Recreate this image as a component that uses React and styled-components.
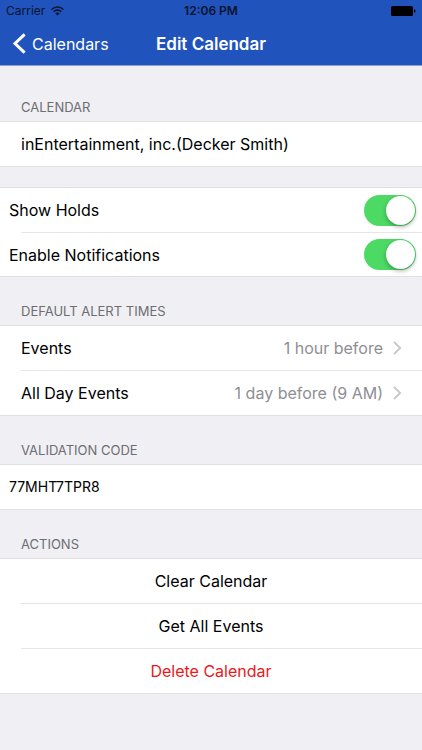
import React, { useState } from "react";
import styled, { createGlobalStyle } from "styled-components";

const GlobalStyle = createGlobalStyle`
  * {
    box-sizing: border-box;
  }
  body {
    margin: 0;
    background: #efeff4;
    color: #000;
    font-family: Inter, "Liberation Sans", sans-serif;
    font-size: 16px;
    line-height: 22px;
  }
`;

const Top = styled.header`
  background: #2053bb;
  border-bottom: 1px solid #8c9fd0;
`;

const StatusBar = styled.div`
  display: grid;
  grid-template-columns: 1fr auto 1fr;
  align-items: center;
  height: 22px;
  padding: 0 6px;
  font-size: 12px;
  line-height: 16px;
  color: #0a1430;
`;

const Carrier = styled.div`
  display: flex;
  align-items: center;
  gap: 6px;
`;

const Clock = styled.div`
  font-weight: 600;
`;

const Battery = styled.svg`
  justify-self: end;
`;

const NavBar = styled.nav`
  display: grid;
  grid-template-columns: 1fr auto 1fr;
  align-items: center;
  height: 43px;
  padding: 0 12px;
  color: #fff;
`;

const BackLink = styled.a`
  display: flex;
  align-items: center;
  gap: 6px;
  color: inherit;
  text-decoration: none;
`;

const Title = styled.h1`
  margin: 0;
  font-size: 17px;
  font-weight: 600;
`;

const SectionTitle = styled.h2`
  display: flex;
  align-items: flex-end;
  height: ${(props) => (props.$first ? "55px" : "48px")};
  margin: 0;
  padding: 0 21px 6px;
  color: #6d6d72;
  font-size: 13px;
  font-weight: 400;
  line-height: 16px;
  text-transform: uppercase;
`;

const Group = styled.div`
  margin-top: ${(props) => (props.$spaced ? "20px" : "0")};
  padding-left: ${(props) => (props.$inset ? "21px" : "0")};
  background: #fff;
  border-top: 1px solid #e0e0e4;
  border-bottom: 1px solid #e0e0e4;
`;

const Row = styled.div`
  display: flex;
  align-items: center;
  justify-content: space-between;
  height: 44px;
  padding: 0 6px 0 0;

  & + & {
    border-top: 1px solid #e6e6e9;
  }
`;

// switch labels start left of the separator
const SwitchLabel = styled.label`
  margin-left: -12px;
`;

const Switch = styled.input`
  appearance: none;
  display: flex;
  width: 52px;
  height: 31px;
  margin: 0;
  padding: 1px;
  border-radius: 16px;
  background: #e5e5ea;
  cursor: pointer;

  &::before {
    content: "";
    width: 29px;
    height: 29px;
    border-radius: 50%;
    background: #fff;
    box-shadow: 0 2px 4px rgba(0, 0, 0, 0.3);
  }

  &:checked {
    justify-content: flex-end;
    background: #4cd964;
  }
`;

const RowButton = styled.button`
  display: flex;
  align-items: center;
  width: 100%;
  height: 44px;
  padding: 0 20px 0 0;
  border: 0;
  background: none;
  color: inherit;
  font: inherit;
  cursor: pointer;

  & + & {
    height: 45px;
    border-top: 1px solid #e6e6e9;
  }
`;

const Value = styled.span`
  margin: 0 10px 0 auto;
  color: #8e8e93;
`;

const Code = styled.div`
  display: flex;
  align-items: center;
  height: 44px;
  padding: 0 9px;
  font-size: 14px;
`;

const Action = styled(RowButton)`
  justify-content: center;
  padding: 0 21px 0 0;
  color: ${(props) => (props.$danger ? "#e8191c" : "#000")};
`;

function WifiIcon() {
  return (
    <svg width="13" height="10" viewBox="0 0 13 10" fill="none" stroke="currentColor" strokeWidth="1.6">
      <path d="M0.6 3.5C3.9 0.2 9.1 0.2 12.4 3.5" />
      <path d="M2.7 5.7C4.8 3.6 8.2 3.6 10.3 5.7" />
      <path d="M6.5 9.6L4.3 7.3C5.5 6.1 7.5 6.1 8.7 7.3Z" fill="currentColor" stroke="none" />
    </svg>
  );
}

function BackIcon() {
  return (
    <svg width="14" height="21" viewBox="0 0 14 21" fill="none" stroke="currentColor" strokeWidth="3">
      <path d="M12.6 1.4L3 10.5L12.6 19.6" />
    </svg>
  );
}

function ChevronIcon() {
  return (
    <svg width="9" height="14" viewBox="0 0 9 14" fill="none" stroke="#c7c7cc" strokeWidth="1.8">
      <path d="M1 1L7.2 7L1 13" />
    </svg>
  );
}

function SwitchRow({ id, label }) {
  const [on, setOn] = useState(true);
  return (
    <Row>
      <SwitchLabel htmlFor={id}>{label}</SwitchLabel>
      <Switch id={id} type="checkbox" role="switch" checked={on} onChange={() => setOn(!on)} />
    </Row>
  );
}

function AlertRow({ label, value }) {
  return (
    <RowButton type="button">
      {label}
      <Value>{value}</Value>
      <ChevronIcon />
    </RowButton>
  );
}

export default function App() {
  return (
    <>
      <GlobalStyle />
      <Top>
        <StatusBar>
          <Carrier>
            Carrier <WifiIcon />
          </Carrier>
          <Clock>12:06 PM</Clock>
          <Battery width="25" height="10" viewBox="0 0 25 10" fill="#000">
            <rect width="22" height="10" rx="1.5" />
            <path d="M23 3.2C25 3.6 25 6.4 23 6.8Z" />
          </Battery>
        </StatusBar>
        <NavBar>
          <BackLink href="#calendars">
            <BackIcon />
            Calendars
          </BackLink>
          <Title>Edit Calendar</Title>
        </NavBar>
      </Top>
      <main>
        <SectionTitle $first>Calendar</SectionTitle>
        <Group $inset>
          <Row>inEntertainment, inc.(Decker Smith)</Row>
        </Group>
        <Group $inset $spaced>
          <SwitchRow id="show-holds" label="Show Holds" />
          <SwitchRow id="notifications" label="Enable Notifications" />
        </Group>
        <SectionTitle>Default Alert Times</SectionTitle>
        <Group $inset>
          <AlertRow label="Events" value="1 hour before" />
          <AlertRow label="All Day Events" value="1 day before (9 AM)" />
        </Group>
        <SectionTitle>Validation Code</SectionTitle>
        <Group>
          <Code>77MHT7TPR8</Code>
        </Group>
        <SectionTitle>Actions</SectionTitle>
        <Group $inset>
          <Action type="button">Clear Calendar</Action>
          <Action type="button">Get All Events</Action>
          <Action type="button" $danger>
            Delete Calendar
          </Action>
        </Group>
      </main>
    </>
  );
}
